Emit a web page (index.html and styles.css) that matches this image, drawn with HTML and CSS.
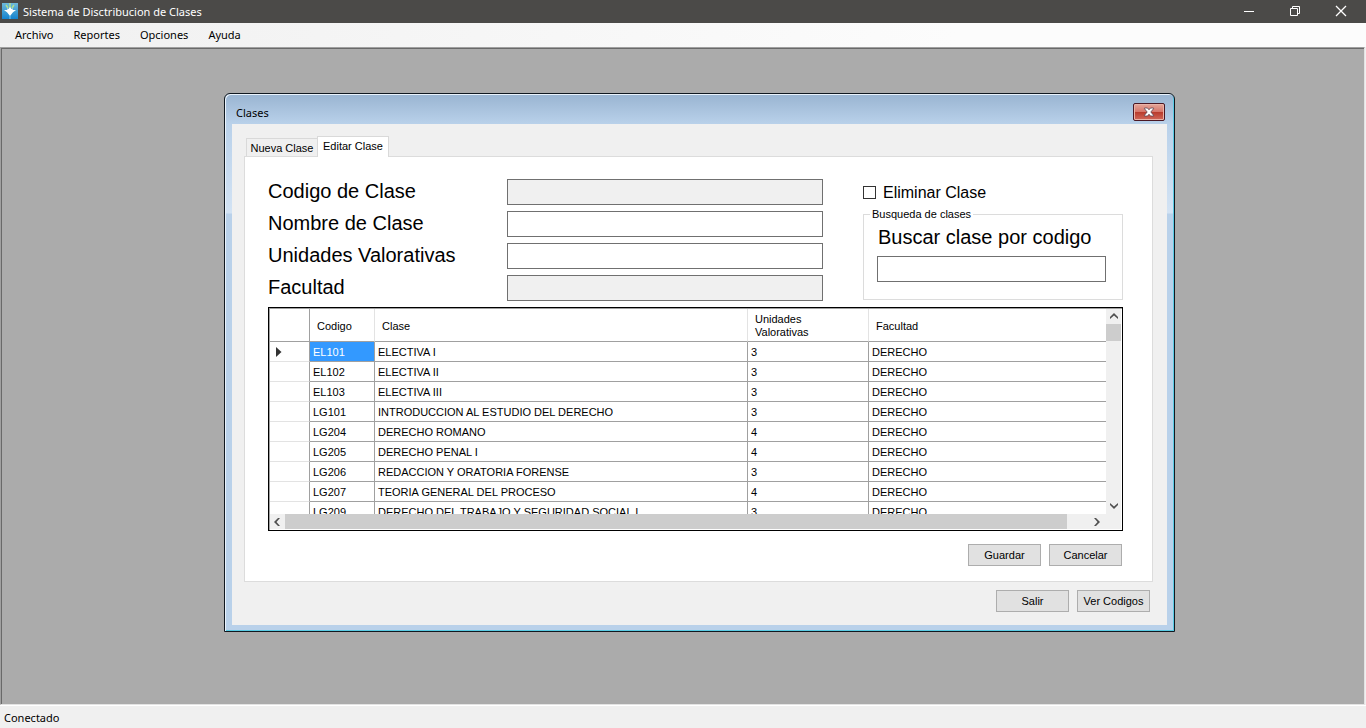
FILE: index.html
```html
<!DOCTYPE html>
<html lang="es">
<head>
<meta charset="utf-8">
<title>Sistema de Disctribucion de Clases</title>
<link rel="stylesheet" href="styles.css">
</head>
<body>
<div class="app">
  <header class="titlebar">
    <svg class="app-icon" width="16" height="16" viewBox="0 0 16 16" aria-hidden="true">
      <defs><linearGradient id="sky" x1="0" y1="0" x2="0" y2="1"><stop offset="0" stop-color="#6fb9d8"/><stop offset="1" stop-color="#1583cf"/></linearGradient></defs>
      <rect width="16" height="16" fill="url(#sky)"/>
      <path d="M8 0v5M4 2l2 3M12 2l-2 3" stroke="#b4e08a" stroke-width="1.400"/>
      <path d="M8 4l1.500 2L11 5.500l-.5 1.500H14l-3 2.200L8 13 5 9.200 2 7h3.500L5 5.500l1.500.5z" fill="#fff"/>
      <path d="M8 12v4" stroke="#7cc8f0" stroke-width="1"/>
    </svg>
    <h1 class="app-title">Sistema de Disctribucion de Clases</h1>
    <div class="window-controls">
      <button class="window-button" aria-label="Minimizar"><svg width="12" height="12" viewBox="0 0 12 12"><path d="M1 6.500h10" stroke="#fff" fill="none"/></svg></button>
      <button class="window-button" aria-label="Restaurar"><svg width="12" height="12" viewBox="0 0 12 12"><path d="M1.500 3.500h7v7h-7zM3.500 3V1.500h7v7H9" stroke="#fff" fill="none"/></svg></button>
      <button class="window-button" aria-label="Cerrar"><svg width="12" height="12" viewBox="0 0 12 12"><path d="M1 1l10 10M11 1L1 11" stroke="#fff" stroke-width="1.300" fill="none"/></svg></button>
    </div>
  </header>
  <nav class="menubar">
    <button class="menu-item">Archivo</button>
    <button class="menu-item">Reportes</button>
    <button class="menu-item">Opciones</button>
    <button class="menu-item">Ayuda</button>
  </nav>
  <main class="workspace">
    <section class="dialog" aria-labelledby="dialog-title">
      <header class="dialog-header">
        <h2 class="dialog-title" id="dialog-title">Clases</h2>
        <button class="dialog-close" aria-label="Cerrar"><svg width="12" height="10" viewBox="0 0 12 10"><path d="M1.500 1h3L6 2.800 7.500 1h3v.8L7.800 5l2.700 3.200V9h-3L6 7.200 4.500 9h-3v-.8L4.200 5 1.500 1.800z" fill="#fff" stroke="#5a4450" stroke-width=".8"/></svg></button>
      </header>
      <div class="dialog-client">
        <div class="tabs" role="tablist">
          <button class="tab" role="tab">Nueva Clase</button>
          <button class="tab tab-active" role="tab" aria-selected="true">Editar Clase</button>
        </div>
        <div class="tab-page">
          <div class="editor">
            <div class="fields">
              <label class="field-label" for="codigo">Codigo de Clase</label><input class="text-box" id="codigo" disabled>
              <label class="field-label" for="nombre">Nombre de Clase</label><input class="text-box" id="nombre">
              <label class="field-label" for="unidades">Unidades Valorativas</label><input class="text-box" id="unidades">
              <label class="field-label" for="facultad">Facultad</label><input class="text-box" id="facultad" disabled>
            </div>
            <div class="side">
              <label class="delete-option"><input class="check-box" type="checkbox">Eliminar Clase</label>
              <fieldset class="search-group">
                <legend class="search-legend">Busqueda de clases</legend>
                <label class="search-label" for="buscar">Buscar clase por codigo</label>
                <input class="text-box search-box" id="buscar">
              </fieldset>
            </div>
          </div>
          <div class="grid">
            <div class="grid-view">
              <table class="grid-table">
                <colgroup><col class="col-marker"><col class="col-code"><col class="col-class"><col class="col-units"><col class="col-faculty"></colgroup>
                <thead><tr><th></th><th>Codigo</th><th>Clase</th><th>Unidades<br>Valorativas</th><th>Facultad</th></tr></thead>
                <tbody>
                  <tr><th><svg class="row-marker" width="6" height="10" viewBox="0 0 6 10"><path d="M0 0l5.500 5L0 10z" fill="#333"/></svg></th><td class="selected">EL101</td><td>ELECTIVA I</td><td>3</td><td>DERECHO</td></tr>
                  <tr><th></th><td>EL102</td><td>ELECTIVA II</td><td>3</td><td>DERECHO</td></tr>
                  <tr><th></th><td>EL103</td><td>ELECTIVA III</td><td>3</td><td>DERECHO</td></tr>
                  <tr><th></th><td>LG101</td><td>INTRODUCCION AL ESTUDIO DEL DERECHO</td><td>3</td><td>DERECHO</td></tr>
                  <tr><th></th><td>LG204</td><td>DERECHO ROMANO</td><td>4</td><td>DERECHO</td></tr>
                  <tr><th></th><td>LG205</td><td>DERECHO PENAL I</td><td>4</td><td>DERECHO</td></tr>
                  <tr><th></th><td>LG206</td><td>REDACCION Y ORATORIA FORENSE</td><td>3</td><td>DERECHO</td></tr>
                  <tr><th></th><td>LG207</td><td>TEORIA GENERAL DEL PROCESO</td><td>4</td><td>DERECHO</td></tr>
                  <tr><th></th><td>LG209</td><td>DERECHO DEL TRABAJO Y SEGURIDAD SOCIAL I</td><td>3</td><td>DERECHO</td></tr>
                </tbody>
              </table>
            </div>
            <div class="scroll scroll-vertical">
              <button class="scroll-arrow" aria-label="Subir"><svg width="8" height="7" viewBox="0 0 8 7"><path d="M0 6V4l4-4 4 4v2L4 2.500z" fill="#505050"/></svg></button>
              <div class="thumb"></div>
              <button class="scroll-arrow" aria-label="Bajar"><svg width="8" height="7" viewBox="0 0 8 7"><path d="M0 1v2l4 4 4-4V1L4 4.500z" fill="#505050"/></svg></button>
            </div>
            <div class="scroll scroll-horizontal">
              <button class="scroll-arrow" aria-label="Izquierda"><svg width="7" height="8" viewBox="0 0 7 8"><path d="M6 0H4L0 4l4 4h2L2.500 4z" fill="#505050"/></svg></button>
              <div class="thumb"></div>
              <button class="scroll-arrow" aria-label="Derecha"><svg width="7" height="8" viewBox="0 0 7 8"><path d="M1 0h2l4 4-4 4H1l3.500-4z" fill="#505050"/></svg></button>
            </div>
          </div>
          <div class="actions"><button class="button">Guardar</button><button class="button">Cancelar</button></div>
        </div>
        <div class="actions actions-outer"><button class="button">Salir</button><button class="button">Ver Codigos</button></div>
      </div>
    </section>
  </main>
  <footer class="statusbar">Conectado</footer>
</div>
</body>
</html>
```
FILE: styles.css
```css
* { box-sizing: border-box; }
body { margin: 0; color: #000; font: 11px/13px "Liberation Sans", Arial, sans-serif; }
button, input { font: inherit; color: inherit; margin: 0; padding: 0; border: 0; border-radius: 0; background: none; }
h1, h2 { margin: 0; font-weight: normal; }
svg { display: block; }

.app { display: flex; flex-direction: column; height: 100vh; background: #f0f0f0; }

.titlebar, .menu-item, .statusbar, .dialog-title { font: 11px/16px "Noto Sans", "Open Sans", sans-serif; }
.titlebar { display: flex; align-items: center; height: 23px; padding-left: 2px; background: #4b4a48; color: #fff; }
.app-icon { margin-bottom: 2px; }
.app-title { flex: 1; margin-left: 5px; font: inherit; }
.window-controls { display: flex; height: 100%; padding-right: 2px; }
.window-button { display: grid; place-items: center; width: 46px; padding-bottom: 2px; }
.menubar { display: flex; height: 24px; padding-left: 5px; background: linear-gradient(90deg, #f0f0f0, #fcfcfc 70%); }
.menu-item { padding: 0 10px; }
.workspace { position: relative; flex: 1; margin-right: 1px; border: 1px solid #a0a0a0; border-right-color: #e3e3e3; border-bottom-color: #e3e3e3; background: #ababab; box-shadow: inset 1px 1px #696969; }
.statusbar { height: 23px; padding: 4px; border-top: 1px solid #fff; }

.dialog { position: absolute; top: 45px; left: 223px; right: 189px; padding: 0 7px 6px; border: 1px solid #101820; border-radius: 6px 6px 0 0; background: linear-gradient(#99b4d1, #b9d1ea 30px, #d3e3f4 119px, #b9d1ea 120px); box-shadow: inset 1px 1px #eaf3fc, inset -1px -1px #59cbe4; }
.dialog-header { display: flex; align-items: center; justify-content: space-between; height: 30px; padding: 6px 2px 0 4px; }
.dialog-title { padding-top: 1px; }
.dialog-close { display: grid; place-items: center; width: 32px; height: 18px; border: 1px solid #4b1824; border-radius: 2px; background: linear-gradient(#e5a79b, #d6766a 48%, #b83a2b 50%, #d1685a); box-shadow: inset 0 0 0 1px #eab3a8; }
.dialog-client { padding: 12px 14px 13px 12px; background: #f0f0f0; }

.tabs { display: flex; align-items: flex-end; padding-left: 2px; }
.tab { width: 72px; height: 18px; padding-top: 1px; border: 1px solid #d9d9d9; border-bottom: 0; background: #f0f0f0; }
.tab-active { height: 21px; margin: 0 0 -1px -1px; padding: 0 0 2px; background: #fff; z-index: 1; }
.tab-page { padding: 22px 29px 15px 23px; border: 1px solid #dcdcdc; background: #fff; }
.editor { display: flex; gap: 40px; }
.fields { flex: 1; display: grid; grid-template-columns: 239px 1fr; gap: 6px 0; }
.field-label, .search-label { font-size: 20px; line-height: 24px; }
.text-box { width: 100%; height: 26px; padding: 0 4px; border: 1px solid #707070; background: #fff; font-size: 16px; }
.text-box:disabled { background: #f0f0f0; }
.side { width: 260px; }
.delete-option { display: flex; align-items: center; gap: 7px; height: 26px; font-size: 16px; }
.check-box { appearance: none; width: 13px; height: 13px; border: 1px solid #333; background: #fff; }
.check-box:checked { background: #333; }
.search-group { margin: 3px 0 0; padding: 4px 16px 17px 13px; border: 1px solid #dcdcdc; }
.search-legend { margin-left: -7px; padding: 0 2px; }
.search-label { display: block; margin-bottom: 7px; padding-left: 1px; }

.grid { display: grid; grid-template-columns: 1fr 15px; grid-template-rows: 205px 15px; margin-top: 6px; border: 1px solid #000; box-shadow: inset 1px 1px #a0a0a0; padding: 1px; }
.grid-view { overflow: hidden; }
.grid-table { width: 100%; table-layout: fixed; border-spacing: 0; text-align: left; }
.col-marker { width: 40px; }
.col-code { width: 65px; }
.col-class { width: 373px; }
.col-units { width: 121px; }
.grid-table th, .grid-table td { height: 20px; padding: 1px 3px 0; border: solid #a0a0a0; border-width: 0 1px 1px 0; font-weight: normal; white-space: nowrap; }
.grid-table thead th { height: 33px; padding: 2px 7px 0; border-right-color: #e3e3e3; }
.grid-table th:first-child { border-right-color: #a0a0a0; }
.grid-table tbody th { border-bottom-color: #e3e3e3; }
.grid-table tr > :last-child { border-right: 0; }
.grid-table .selected { background: #3399ff; color: #fff; }
.row-marker { margin-left: 3px; }
.scroll { display: flex; background: #f0f0f0; }
.scroll-vertical { flex-direction: column; padding-bottom: 1px; }
.scroll-vertical .thumb { height: 17px; margin-bottom: auto; }
.scroll-horizontal { grid-column: 1 / -1; padding-right: 17px; }
.scroll-horizontal .thumb { flex: 1; margin-right: 22px; }
.thumb { background: #cdcdcd; }
.scroll-arrow { display: grid; place-items: center; width: 15px; height: 15px; }

.actions { display: flex; justify-content: flex-end; gap: 8px; margin-top: 13px; padding-right: 1px; }
.actions-outer { margin-top: 8px; padding-right: 3px; }
.button { width: 73px; height: 22px; border: 1px solid #adadad; background: #e1e1e1; }
```
